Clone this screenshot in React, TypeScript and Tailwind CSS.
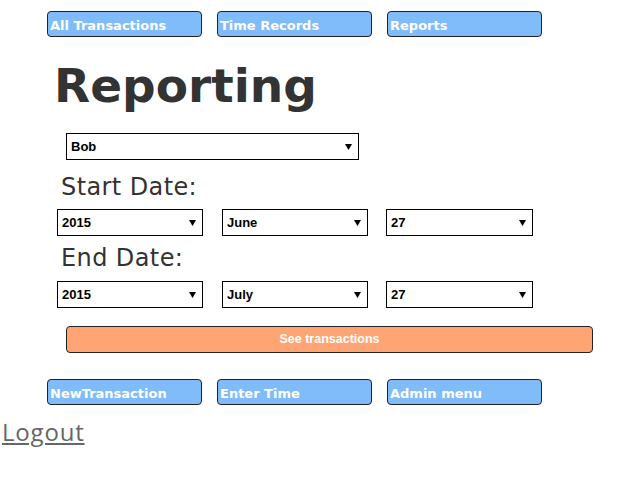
import React from "react";

const navFont = { fontFamily: '"DejaVu Sans", Verdana, sans-serif' };

function NavButton({ label }: { label: string }) {
  return (
    <div
      className="w-[155px] h-[26px] rounded-[4px] border border-[#222] bg-[#80bbfa] text-white text-[13px] font-bold flex items-center pl-[2px] pt-[2px] leading-none"
      style={navFont}
    >
      {label}
    </div>
  );
}

function Arrow() {
  return (
    <svg width="7" height="6" viewBox="0 0 7 6" className="shrink-0">
      <polygon points="0,0 7,0 3.5,6" fill="#000" />
    </svg>
  );
}

function Select({ value, w }: { value: string; w: string }) {
  return (
    <div
      className={`${w} h-[27px] border border-black bg-white flex items-center justify-between pl-[4px] pr-[6px] text-[13px] font-bold text-black`}
      style={{ fontFamily: '"Liberation Sans", Arial, sans-serif' }}
    >
      <span>{value}</span>
      <Arrow />
    </div>
  );
}

export default function App() {
  return (
    <div className="w-[619px] h-[494px] bg-white relative overflow-hidden">
      <div className="flex gap-[15px] pl-[47px] pt-[11px]">
        <NavButton label="All Transactions" />
        <NavButton label="Time Records" />
        <NavButton label="Reports" />
      </div>
      <h1
        className="text-[47px] leading-[48px] font-bold text-[#333] pl-[54px] mt-[25px]"
        style={navFont}
      >
        Reporting
      </h1>
      <div className="pl-[66px] mt-[23px]">
        <Select value="Bob" w="w-[293px]" />
      </div>
      <div
        className="text-[24px] leading-[24px] text-[#333] pl-[61px] mt-[15px] tracking-[0.4px]"
        style={navFont}
      >
        Start Date:
      </div>
      <div className="flex pl-[57px] mt-[10px]">
        <Select value="2015" w="w-[146px]" />
        <div className="w-[19px]" />
        <Select value="June" w="w-[146px]" />
        <div className="w-[18px]" />
        <Select value="27" w="w-[147px]" />
      </div>
      <div
        className="text-[24px] leading-[24px] text-[#333] pl-[61px] mt-[10px] tracking-[0.4px]"
        style={navFont}
      >
        End Date:
      </div>
      <div className="flex pl-[57px] mt-[11px]">
        <Select value="2015" w="w-[146px]" />
        <div className="w-[19px]" />
        <Select value="July" w="w-[146px]" />
        <div className="w-[18px]" />
        <Select value="27" w="w-[147px]" />
      </div>
      <div className="pl-[66px] mt-[18px]">
        <div
          className="w-[527px] h-[27px] rounded-[4px] border border-[#222] bg-[#ffa574] text-white text-[12.5px] font-bold flex items-center justify-center"
          style={{ fontFamily: '"Liberation Sans", Arial, sans-serif' }}
        >
          See transactions
        </div>
      </div>
      <div className="flex gap-[15px] pl-[47px] mt-[26px]">
        <NavButton label="NewTransaction" />
        <NavButton label="Enter Time" />
        <NavButton label="Admin menu" />
      </div>
      <div className="pl-[2px] mt-[15px]">
        <a
          href="#"
          className="text-[24px] leading-[24px] text-[#666] underline tracking-[0.8px]"
          style={{ fontFamily: '"Open Sans", sans-serif' }}
        >
          Logout
        </a>
      </div>
    </div>
  );
}
